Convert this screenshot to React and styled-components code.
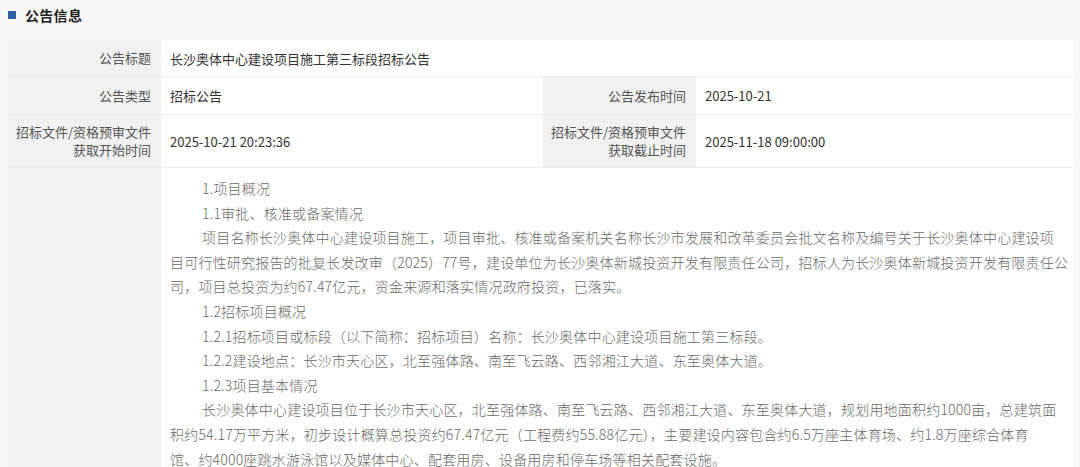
import React from "react";
import styled, { createGlobalStyle } from "styled-components";

const GlobalStyle = createGlobalStyle`
  html, body {
    margin: 0;
    padding: 0;
    background: #f8f8f8;
    font-family: "Noto Sans CJK SC", "Noto Sans", sans-serif;
  }
`;

const Page = styled.div`
  padding: 0 7px 0 8px;
`;

const Header = styled.div`
  height: 30px;
  display: flex;
  align-items: center;
  gap: 9px;
  margin-bottom: 10px;
`;

const Square = styled.span`
  width: 8px;
  height: 8px;
  background: #2f62ad;
`;

const Title = styled.h2`
  margin: 0;
  font-size: 14px;
  font-weight: 700;
  color: #222;
  letter-spacing: 0.3px;
`;

const Table = styled.div`
  display: grid;
  grid-template-columns: 153px 382px 153px 1fr;
  background: #fff;
`;

const Label = styled.div`
  background: #f1f1f1;
  color: #555;
  font-size: 13px;
  line-height: 18px;
  text-align: right;
  white-space: nowrap;
  padding: 0 10px 0 0;
  min-height: ${(p) => p.$h || 36}px;
  display: flex;
  align-items: center;
  justify-content: flex-end;
  border-bottom: 1px solid #ececec;
`;

const Value = styled.div`
  grid-column: span ${(p) => p.$span || 1};
  color: #333;
  font-size: 13px;
  padding: 0 9px;
  display: flex;
  align-items: center;
  border-bottom: 1px solid #ececec;
`;

const Body = styled.div`
  grid-column: span 3;
  padding: 8px 0 0 9px;
  color: #6a6a6a;
  font-size: 14px;
  font-weight: 300;
  line-height: 24.6px;
  letter-spacing: 0.2px;
  white-space: nowrap;
`;

const Para = styled.p`
  margin: 0;
  text-indent: ${(p) => (p.$indent ? "32px" : "0")};
`;

const content = [
  ["1.项目概况"],
  ["1.1审批、核准或备案情况"],
  [
    "项目名称长沙奥体中心建设项目施工，项目审批、核准或备案机关名称长沙市发展和改革委员会批文名称及编号关于长沙奥体中心建设项",
    "目可行性研究报告的批复长发改审（2025）77号，建设单位为长沙奥体新城投资开发有限责任公司，招标人为长沙奥体新城投资开发有限责任公",
    "司，项目总投资为约67.47亿元，资金来源和落实情况政府投资，已落实。",
  ],
  ["1.2招标项目概况"],
  ["1.2.1招标项目或标段（以下简称：招标项目）名称：长沙奥体中心建设项目施工第三标段。"],
  ["1.2.2建设地点：长沙市天心区，北至强体路、南至飞云路、西邻湘江大道、东至奥体大道。"],
  ["1.2.3项目基本情况"],
  [
    "长沙奥体中心建设项目位于长沙市天心区，北至强体路、南至飞云路、西邻湘江大道、东至奥体大道，规划用地面积约1000亩，总建筑面",
    "积约54.17万平方米，初步设计概算总投资约67.47亿元（工程费约55.88亿元），主要建设内容包含约6.5万座主体育场、约1.8万座综合体育",
    "馆、约4000座跳水游泳馆以及媒体中心、配套用房、设备用房和停车场等相关配套设施。",
  ],
];

export default function App() {
  return (
    <Page>
      <GlobalStyle />
      <Header>
        <Square />
        <Title>公告信息</Title>
      </Header>
      <Table>
        <Label $h={36}>公告标题</Label>
        <Value $span={3}>长沙奥体中心建设项目施工第三标段招标公告</Value>

        <Label $h={37}>公告类型</Label>
        <Value>招标公告</Value>
        <Label $h={37}>公告发布时间</Label>
        <Value>2025-10-21</Value>

        <Label $h={52}>
          <span>
            招标文件/资格预审文件
            <br />
            获取开始时间
          </span>
        </Label>
        <Value>2025-10-21 20:23:36</Value>
        <Label $h={52}>
          <span>
            招标文件/资格预审文件
            <br />
            获取截止时间
          </span>
        </Label>
        <Value>2025-11-18 09:00:00</Value>

        <Label $h={320} />
        <Body>
          {content.map((lines, i) => (
            <Para key={i} $indent>
              {lines.map((line, j) => (
                <React.Fragment key={j}>
                  {j > 0 && <br />}
                  {line}
                </React.Fragment>
              ))}
            </Para>
          ))}
        </Body>
      </Table>
    </Page>
  );
}
